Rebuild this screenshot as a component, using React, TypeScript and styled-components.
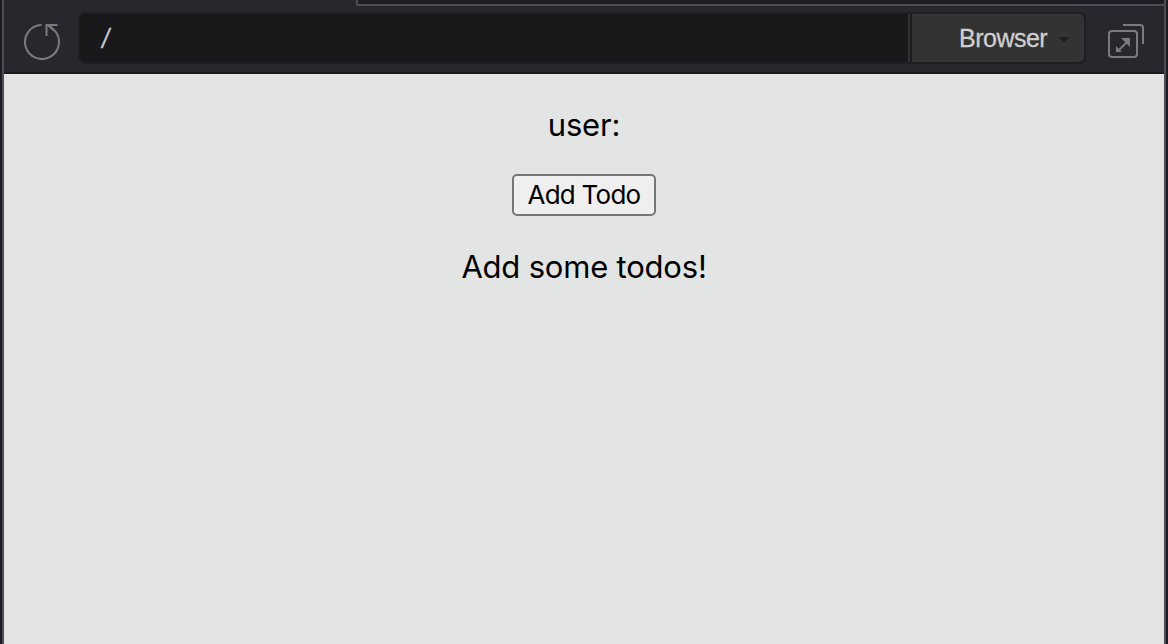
import styled, { createGlobalStyle } from "styled-components";

const GlobalStyle = createGlobalStyle`
    * {
        box-sizing: border-box;
    }

    body {
        margin: 0;
        background: #1d1e22;
    }
`;

const StyledWindow = styled.div`
    display: flex;
    flex-direction: column;
    height: 100vh;
    margin: 0 2px;
    border-left: 2px solid #4b4c57;
    border-right: 2px solid #4b4c57;
    overflow: hidden;
`;

const StyledTabs = styled.div`
    display: flex;
    height: 6px;
    flex-shrink: 0;
    background: #27282e;
`;

const StyledActiveTab = styled.div`
    width: 352px;
`;

const StyledTabSpace = styled.div`
    flex: 1;
    background: #1d1e22;
    border-left: 2px solid #4b4c57;
    border-bottom: 2px solid #4b4c57;
    border-bottom-left-radius: 2px;
`;

const StyledToolbar = styled.header`
    display: flex;
    height: 68px;
    flex-shrink: 0;
    padding: 6px 18px 0;
    background: #27282e;
    border-bottom: 2px solid #1b1b1d;
`;

const StyledIcon = styled.svg`
    display: block;
    flex-shrink: 0;
    width: 40px;
    height: 40px;
    margin-top: 8px;
    fill: none;
    stroke: #7b7b7b;
    stroke-width: 2;
`;

const StyledAddress = styled.div`
    flex: 1;
    height: 52px;
    margin: 0 20px 0 16px;
    display: flex;
    background: #19191b;
    border: 2px solid #1f1f20;
    border-radius: 7px;
    overflow: hidden;
`;

const StyledPath = styled.div`
    flex: 1;
    padding-left: 22px;
    color: #c5c8d2;
    font: 28px/50px "Liberation Sans", Arial, sans-serif;
    transform: skewX(-9deg);
`;

const StyledSelect = styled.div`
    display: flex;
    align-items: center;
    width: 176px;
    padding-left: 49px;
    background: #333333;
    border-left: 2px solid #303135;
    box-shadow: inset 2px 0 #1d1d1e, inset 0 0 0 1px #34363b;
    border-radius: 0 5px 5px 0;
    color: #cfcfcf;
    font: 25px/46px "Liberation Sans", Arial, sans-serif;
    letter-spacing: -0.5px;
    -webkit-text-stroke: 0.3px #cfcfcf;
`;

const StyledCaret = styled.span`
    margin: 4px 0 0 12px;
    border: 5px solid transparent;
    border-top: 6px solid #1d1d1d;
    border-bottom: 0;
`;

const StyledPage = styled.main`
    flex: 1;
    display: flex;
    flex-direction: column;
    align-items: center;
    padding-top: 32px;
    background: #e3e5e4;
    color: #000;
    font-family: Inter, sans-serif;
`;

const StyledText = styled.p`
    margin: 0;
    font-size: 31px;
    line-height: 38px;
    letter-spacing: -0.2px;
`;

const StyledButton = styled.button`
    width: 144px;
    height: 42px;
    margin: 30px 0 32px;
    padding: 0;
    background: #efefef;
    border: 2px solid #767676;
    border-radius: 5px;
    color: #000;
    font: 26px/38px Inter, sans-serif;
    letter-spacing: -0.75px;
    white-space: nowrap;
`;

function ReloadIcon() {
    return (
        <StyledIcon viewBox="0 0 40 40">
            <path d="M19.5 5A17 17 0 1 0 31.5 9.5L26 5.5" />
            <path d="M24.5 16V5H35.5" />
            <path d="M25 5H29L33 11L31 11Z" fill="#7b7b7b" stroke="none" />
        </StyledIcon>
    );
}

function OpenIcon() {
    return (
        <StyledIcon viewBox="0 0 40 40">
            <rect x="3" y="11" width="28" height="26" rx="3" />
            <path d="M17 5H34Q37 5 37 8V24" />
            <path d="M13 30L21 22" />
            <path d="M15 18H24V27ZM10 26V32H16Z" fill="#7b7b7b" stroke="none" />
        </StyledIcon>
    );
}

export default function App() {
    return (
        <StyledWindow>
            <GlobalStyle />
            <StyledTabs>
                <StyledActiveTab />
                <StyledTabSpace />
            </StyledTabs>
            <StyledToolbar>
                <ReloadIcon />
                <StyledAddress>
                    <StyledPath>/</StyledPath>
                    <StyledSelect>
                        Browser
                        <StyledCaret />
                    </StyledSelect>
                </StyledAddress>
                <OpenIcon />
            </StyledToolbar>
            <StyledPage>
                <StyledText>user:</StyledText>
                <StyledButton>Add Todo</StyledButton>
                <StyledText>Add some todos!</StyledText>
            </StyledPage>
        </StyledWindow>
    );
}
